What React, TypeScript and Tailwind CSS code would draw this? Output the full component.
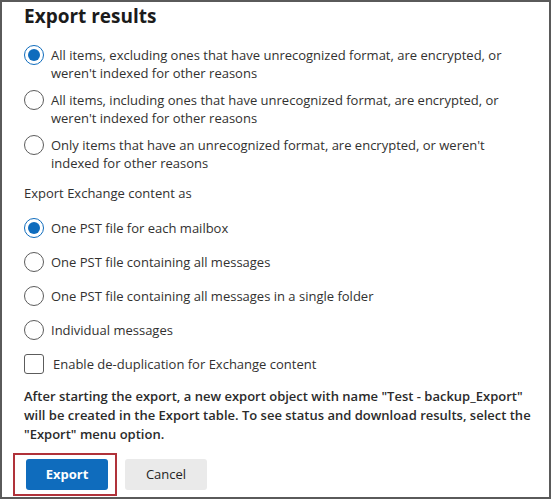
import React from "react";

const font = { fontFamily: '"Open Sans", "Noto Sans", sans-serif' };

function Radio({ checked }: { checked?: boolean }) {
  return checked ? (
    <span className="flex h-[20px] w-[20px] shrink-0 items-center justify-center rounded-full border border-[#0f6cbd]">
      <span className="h-[12px] w-[12px] rounded-full bg-[#0f6cbd]" />
    </span>
  ) : (
    <span className="block h-[20px] w-[20px] shrink-0 rounded-full border border-[#5c5c5c]" />
  );
}

const scopeOptions = [
  {
    label: "All items, excluding ones that have unrecognized format, are encrypted, or weren't indexed for other reasons",
    checked: true,
  },
  {
    label: "All items, including ones that have unrecognized format, are encrypted, or weren't indexed for other reasons",
  },
  {
    label: "Only items that have an unrecognized format, are encrypted, or weren't indexed for other reasons",
  },
];

const exchangeOptions = [
  { label: "One PST file for each mailbox", checked: true },
  { label: "One PST file containing all messages" },
  { label: "One PST file containing all messages in a single folder" },
  { label: "Individual messages" },
];

export default function App() {
  return (
    <div
      className="h-[499px] w-[551px] overflow-hidden border-2 border-[#5a5a5a] bg-white text-[#323130]"
      style={font}
    >
      <div className="pl-[22px] pr-[12px]">
        <h1 className="mt-[-1px] text-[19px] font-bold leading-[30px] text-[#1b1b1b]">
          Export results
        </h1>

        <div className="mt-[15px] flex flex-col gap-[9px]">
          {scopeOptions.map((o) => (
            <label key={o.label} className="flex items-start gap-[7px]">
              <span className="-mt-px shrink-0">
                <Radio checked={o.checked} />
              </span>
              <span className="w-[475px] text-[13px] leading-[18px]">{o.label}</span>
            </label>
          ))}
        </div>

        <p className="mt-[12px] text-[13px] leading-[18px]">Export Exchange content as</p>

        <div className="mt-[16px] flex flex-col gap-[14px]">
          {exchangeOptions.map((o) => (
            <label key={o.label} className="flex items-center gap-[7px]">
              <Radio checked={o.checked} />
              <span className="text-[13px] leading-[20px]">{o.label}</span>
            </label>
          ))}
          <label className="flex items-center gap-[9px]">
            <span className="h-[20px] w-[20px] shrink-0 rounded-[3px] border border-[#5c5c5c]" />
            <span className="text-[13px] leading-[20px]">Enable de-duplication for Exchange content</span>
          </label>
        </div>

        <p className="mt-[13px] w-[515px] text-[13px] font-semibold leading-[19px] text-[#2b2b2b]">
          After starting the export, a new export object with name "Test - backup_Export" will be created in the
          Export table. To see status and download results, select the "Export" menu option.
        </p>

        <div className="ml-[-11px] mt-[9px] flex items-center gap-[8px]">
          <div className="border-2 border-[#b0323a] py-[4px] pl-[11px] pr-[7px]">
            <button className="block h-[31px] w-[82px] rounded-[3px] bg-[#0f6cbd] text-[13px] font-bold text-white">
              Export
            </button>
          </div>
          <button className="h-[31px] w-[82px] rounded-[3px] bg-[#eaeaea] text-[13px] text-[#242424]">
            Cancel
          </button>
        </div>
      </div>
    </div>
  );
}
